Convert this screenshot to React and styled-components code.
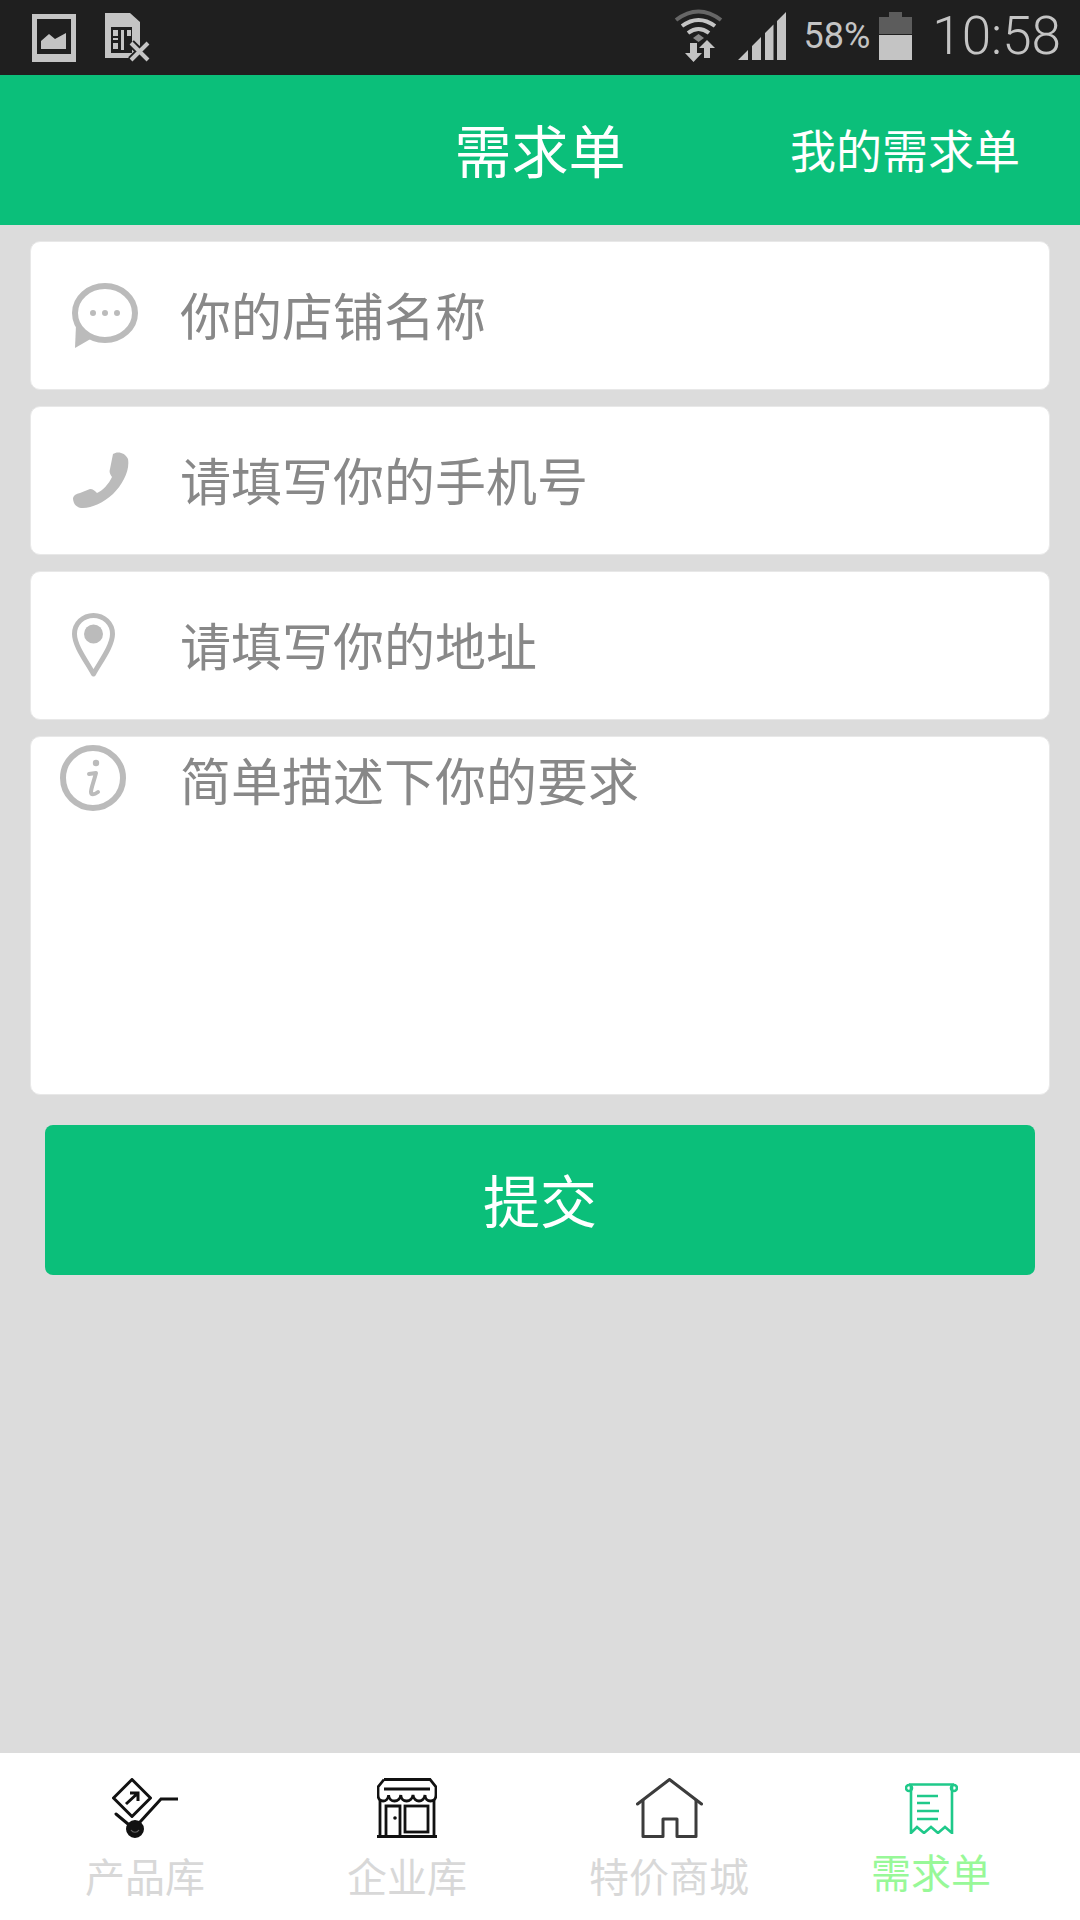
import React from 'react'
import styled, { createGlobalStyle } from 'styled-components'

const cjk = `"Noto Sans CJK SC", "Noto Sans", sans-serif`

function ChatIcon() {
  return (
    <svg width="66" height="66" viewBox="0 0 66 66">
      <ellipse cx="33" cy="30" rx="30" ry="27" fill="none" stroke="#bbb" strokeWidth="6" />
      <path d="M4 42 L3 65 L22 54 Z" fill="#bbb" />
      <circle cx="21" cy="30" r="3" fill="#bbb" />
      <circle cx="33" cy="30" r="3" fill="#bbb" />
      <circle cx="45" cy="30" r="3" fill="#bbb" />
    </svg>
  )
}

function PhoneIcon() {
  return (
    <svg width="56" height="57" viewBox="0 0 56 57">
      <path d="M40 2 C44 -1 52 0 55 7 C57 18 50 32 40 42 C30 51 17 57 8 56 C2 55 0 50 0 46 C1 43 3 42 7 41 L17 37 C20 37 22 39 24 41 C29 39 36 32 39 25 C37 22 36 20 37 17 Z" fill="#bbb" />
    </svg>
  )
}

function PinIcon() {
  return (
    <svg width="43" height="66" viewBox="0 0 43 66">
      <path d="M21.5 61 C15 49 2.5 33 2.5 21 C2.5 10.5 11 2.5 21.5 2.5 C32 2.5 40.5 10.5 40.5 21 C40.5 33 28 49 21.5 61 Z" fill="none" stroke="#bbb" strokeWidth="5" strokeLinejoin="round" />
      <circle cx="21.5" cy="21" r="9.5" fill="#bbb" />
    </svg>
  )
}

function InfoIcon() {
  return (
    <svg width="66" height="66" viewBox="0 0 66 66">
      <circle cx="33" cy="33" r="30" fill="none" stroke="#bbb" strokeWidth="6" />
      <circle cx="36" cy="18" r="3.2" fill="#bbb" />
      <path d="M29 29 L36 28 C34 36 31 43 31 47 C31 50 34 50 38 47" fill="none" stroke="#bbb" strokeWidth="4" strokeLinecap="round" strokeLinejoin="round" />
    </svg>
  )
}

function CartIcon() {
  return (
    <svg width="66" height="60" viewBox="0 0 66 60" fill="none" stroke="#111" strokeWidth="3">
      <path d="M20 1.500 L38.500 20 L20 38.500 L1.500 20 Z" strokeLinejoin="round" />
      <path d="M14 26 L26 15 M18 15 L26 15 L26 23" strokeWidth="3" />
      <path d="M4 36 L16 46 M28 44 L49 21 L66 21" strokeLinecap="round" />
      <circle cx="23" cy="51" r="7.500" fill="#111" />
      <path d="M19 52 C21 55 25 55 27 52" stroke="#666" strokeWidth="1.2" />
    </svg>
  )
}

function StoreIcon() {
  return (
    <svg width="60" height="60" viewBox="0 0 60 60" fill="none" stroke="#111" strokeWidth="2.800">
      <path d="M7 1.500 L53 1.500 L59 9 L59 17 M7 1.500 L1 9 L1 17" />
      <path d="M7 11 L53 11" />
      <path d="M1 17 C1 25 11 25 11.6 17 C12 25 23 25 23.8 17 C24 25 35 25 36 17 C37 25 47 25 48 17 C48 25 59 25 59 17" />
      <path d="M3 21 L3 58 M57 21 L57 58" />
      <path d="M0 58.500 L60 58.500" strokeWidth="3" />
      <path d="M9 58 L9 28 L23 28 L23 58" />
      <rect x="28" y="28" width="23" height="26" />
      <circle cx="18" cy="40" r="1.800" fill="#111" stroke="none" />
    </svg>
  )
}

function HouseIcon() {
  return (
    <svg width="67" height="60" viewBox="0 0 67 60" fill="none" stroke="#3c3c3c" strokeWidth="3" strokeLinejoin="round">
      <path d="M1.500 26 L33.500 1.500 L65.500 26" strokeLinecap="round" />
      <path d="M7 21 L7 58.500 L27 58.500 L27 41 L41 41 L41 58.500 L60 58.500 L60 21" />
    </svg>
  )
}

function ReceiptIcon() {
  return (
    <svg width="53" height="51" viewBox="0 0 53 51" fill="none" stroke="#1fc98a" strokeWidth="2.600">
      <path d="M4 1.500 L49 1.500" />
      <circle cx="4" cy="5" r="3" />
      <circle cx="49" cy="5" r="3" />
      <path d="M6 3 L6 50 L12 44 L19 50 L26 44 L33 50 L40 44 L47 50 L47 3" />
      <path d="M12 13 L33 13 M12 20 L25 20 M12 28 L34 28 M12 36 L33 36" />
    </svg>
  )
}

const fields = [
  { icon: <ChatIcon />, inset: 41, text: '你的店铺名称' },
  { icon: <PhoneIcon />, inset: 42, text: '请填写你的手机号' },
  { icon: <PinIcon />, inset: 41, text: '请填写你的地址' },
]

const tabs = [
  { icon: <CartIcon />, label: '产品库' },
  { icon: <StoreIcon />, label: '企业库' },
  { icon: <HouseIcon />, label: '特价商城' },
  { icon: <ReceiptIcon />, label: '需求单', active: true },
]

export default function App() {
  return (
    <>
      <GlobalStyle />
      <Page>
        <StatusBar>
          <StatusGroup>
            <svg width="44" height="48" viewBox="0 0 44 48">
              <path fillRule="evenodd" d="M0 0 H44 V48 H0 Z M5 5 V40 H39 V5 Z" fill="#c4c4c4" />
              <path d="M9 35 V27 L17 20 L23 25 L34 19 V35 Z" fill="#c4c4c4" />
            </svg>
            <svg width="45" height="50" viewBox="0 0 45 50">
              <path d="M0 0 H25 L35 9 V34 L29 45 H0 Z" fill="#c4c4c4" />
              <path d="M6 14 H27 V40 H6 Z" fill="#1f1f1f" />
              <path d="M8 17 H13 V23 H8 Z M8 25 H13 V27 H8 Z M8 30 H13 V36 H8 Z M16 17 H19 V37 H16 Z M22 17 H26 V23 H22 Z" fill="#c4c4c4" />
              <path d="M26 30 L43 47 M43 30 L26 47" stroke="#1f1f1f" strokeWidth="8" />
              <path d="M26 30 L43 47 M43 30 L26 47" stroke="#c4c4c4" strokeWidth="4" />
            </svg>
          </StatusGroup>
          <RightGroup>
            <svg width="49" height="53" viewBox="0 0 49 53" fill="none">
              <path d="M2 11 Q24.5 -6 47 11" stroke="#666" strokeWidth="4" />
              <path d="M8 17 Q24.500 5 41 17" stroke="#c4c4c4" strokeWidth="4" />
              <path d="M14 24 Q24.500 16 35 24" stroke="#c4c4c4" strokeWidth="4" />
              <path d="M19 29 L24.500 25 L30 29 L24.500 33 Z" fill="#888" />
              <path d="M16 34 H23 V44 H28 L19.500 53 L11 44 H16 Z" fill="#c4c4c4" />
              <path d="M30 49 H36 V39 H41 L33 31 L25 39 H30 Z" fill="#c4c4c4" />
            </svg>
            <SignalIcon width="48" height="48" viewBox="0 0 48 48">
              <path d="M0 48 L10 38 V48 Z M14 34 L23 25 V48 H14 Z M27 21 L35.500 12.500 V48 H27 Z M39 9 L48 0 V48 H39 Z" fill="#c4c4c4" />
            </SignalIcon>
            <Percent>58%</Percent>
            <svg width="33" height="48" viewBox="0 0 33 48">
              <path d="M10 0 H23 V5 H33 V22 H0 V5 H10 Z" fill="#5c5c5c" />
              <path d="M0 23 H33 V48 H0 Z" fill="#c4c4c4" />
            </svg>
            <Clock>10:58</Clock>
          </RightGroup>
        </StatusBar>
        <Header>
          <span />
          <Title>需求单</Title>
          <HeaderLink>我的需求单</HeaderLink>
        </Header>
        <Form>
          {fields.map((f) => (
            <FieldCard key={f.text}>
              <IconSlot $inset={f.inset}>{f.icon}</IconSlot>
              <FieldInput placeholder={f.text} />
            </FieldCard>
          ))}
          <AreaCard>
            <IconSlot $inset={29}><InfoIcon /></IconSlot>
            <AreaInput placeholder="简单描述下你的要求" />
          </AreaCard>
          <SubmitButton type="button">提交</SubmitButton>
        </Form>
        <TabBar>
          {tabs.map((t) => (
            <Tab key={t.label}>
              <TabIcon>{t.icon}</TabIcon>
              <TabLabel $active={t.active}>{t.label}</TabLabel>
            </Tab>
          ))}
        </TabBar>
      </Page>
    </>
  )
}

const GlobalStyle = createGlobalStyle`
  html, body {
    margin: 0;
    padding: 0;
  }
  body {
    font-family: ${cjk};
  }
`

const Page = styled.div`
  width: 1080px;
  height: 1920px;
  display: flex;
  flex-direction: column;
  background: #dcdcdc;
  overflow: hidden;
`

const StatusBar = styled.div`
  height: 75px;
  flex: none;
  display: flex;
  align-items: center;
  justify-content: space-between;
  padding: 0 19px 0 32px;
  background: #1f1f1f;
`

const StatusGroup = styled.div`
  display: flex;
  align-items: center;
  gap: 29px;
`

const RightGroup = styled.div`
  display: flex;
  align-items: center;
  padding-bottom: 4px;
`

const SignalIcon = styled.svg`
  margin-left: 15px;
`

const Percent = styled.span`
  margin: 0 9px 0 17px;
  font: 400 36px Roboto, sans-serif;
  color: #c4c4c4;
`

const Clock = styled.span`
  margin-left: 20px;
  font: 300 53px Roboto, sans-serif;
  color: #c4c4c4;
`

const Header = styled.header`
  height: 150px;
  flex: none;
  box-sizing: border-box;
  display: grid;
  grid-template-columns: 1fr auto 1fr;
  align-items: center;
  padding: 0 60px 4px;
  background: #0bbf7a;
  color: #fff;
`

const Title = styled.h1`
  margin: 0;
  font-size: 57px;
  font-weight: 400;
`

const HeaderLink = styled.a`
  justify-self: end;
  font-size: 46px;
`

const Form = styled.main`
  flex: 1;
  display: flex;
  flex-direction: column;
  gap: 16px;
  padding: 16px 30px 0;
`

const FieldCard = styled.label`
  height: 149px;
  box-sizing: border-box;
  display: flex;
  align-items: center;
  border: 1px solid #e8e8e8;
  border-radius: 10px;
  background: #fff;
`

const AreaCard = styled(FieldCard)`
  height: 359px;
  align-items: flex-start;
  padding-top: 8px;
`

const IconSlot = styled.span`
  width: 149px;
  flex: none;
  box-sizing: border-box;
  display: flex;
  padding-left: ${(p) => p.$inset}px;
`

const FieldInput = styled.input`
  flex: 1;
  min-width: 0;
  padding: 0 0 4px;
  border: 0;
  outline: 0;
  background: transparent;
  font-family: ${cjk};
  font-size: 51px;
  &::placeholder {
    color: #888;
    opacity: 1;
  }
`

const AreaInput = styled.textarea`
  flex: 1;
  height: 330px;
  padding: 0;
  border: 0;
  outline: 0;
  resize: none;
  background: transparent;
  font-family: ${cjk};
  font-size: 51px;
  line-height: 68px;
  &::placeholder {
    color: #888;
    opacity: 1;
  }
`

const SubmitButton = styled.button`
  height: 150px;
  flex: none;
  margin: 14px 15px 0;
  padding: 0 0 4px;
  border: 0;
  border-radius: 8px;
  background: #0bbf7a;
  color: #fff;
  font-family: ${cjk};
  font-size: 57px;
`

const TabBar = styled.nav`
  height: 167px;
  flex: none;
  box-sizing: border-box;
  display: grid;
  grid-template-columns: repeat(4, 262px);
  padding: 25px 0 0 14px;
  background: #fff;
`

const Tab = styled.a`
  display: flex;
  flex-direction: column;
  align-items: center;
`

const TabIcon = styled.span`
  height: 60px;
  display: flex;
  align-items: center;
`

const TabLabel = styled.span`
  margin-top: ${(p) => (p.$active ? '4px' : '8px')};
  font-size: 40px;
  color: ${(p) => (p.$active ? '#98f898' : '#d8d8d8')};
`
